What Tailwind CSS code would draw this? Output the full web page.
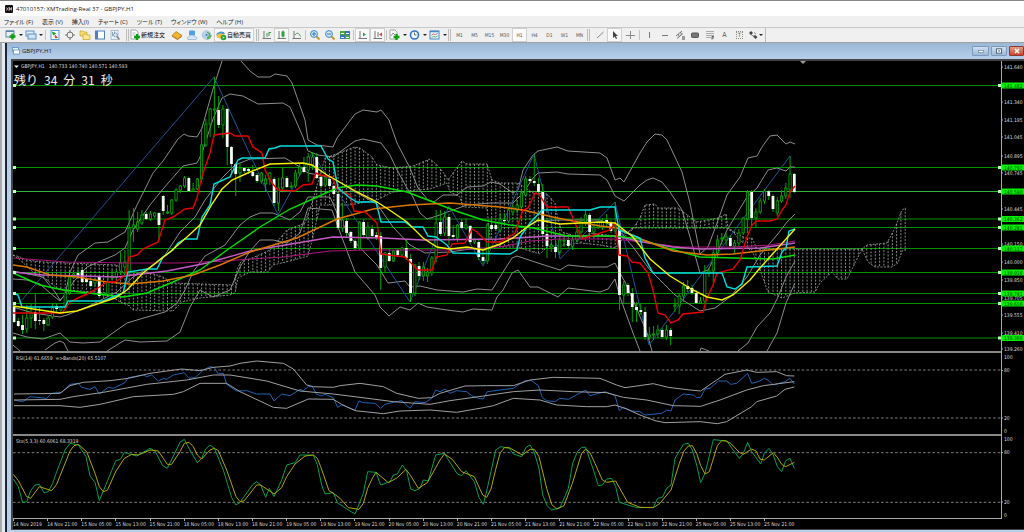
<!DOCTYPE html>
<html lang="ja">
<head>
    <meta charset="UTF-8">
    <meta name="viewport" content="width=device-width, initial-scale=1.0">
    <title>47010157: XMTrading-Real 37 - GBPJPY,H1</title>
    <script src="https://cdn.jsdelivr.net/npm/@tailwindcss/browser@4"></script>
</head>
<body class="min-h-screen flex flex-col bg-[#f0f0f0] overflow-x-hidden font-['Open_Sans','Noto_Sans_CJK_JP',sans-serif] text-[#222]">

    <!-- Title bar -->
    <header class="flex items-center h-4 shrink-0 border-t border-[#888] bg-white pl-[5px] gap-[3px]">
        <svg class="w-2 h-2" viewBox="0 0 8 8"><rect width="8" height="8" rx="1" fill="#111"/><path d="M1.5 2.5l2 3M3.5 2.5l-2 3M4.5 5.5v-3l1 2 1-2v3" stroke="#e8e8e8" stroke-width=".7" fill="none"/><path d="M1.5 5.5l1-1.500" stroke="#e33" stroke-width=".8"/></svg>
        <h1 class="text-[6px] leading-[8px] whitespace-nowrap">47010157: XMTrading-Real 37 - GBPJPY,H1</h1>
    </header>

    <!-- Menu -->
    <nav class="flex items-center h-[11px] shrink-0 pl-1 gap-[9px] text-[6px] leading-[10px] whitespace-nowrap [font-feature-settings:'palt']">
        <a href="#">ファイル (F)</a>
        <a href="#">表示 (V)</a>
        <a href="#">挿入(I)</a>
        <a href="#">チャート (C)</a>
        <a href="#">ツール (T)</a>
        <a href="#">ウィンドウ (W)</a>
        <a href="#">ヘルプ (H)</a>
    </nav>

    <!-- Toolbar -->
    <div class="flex items-stretch h-4 shrink-0 border-t border-b border-t-[#c8c8c8] border-b-[#a0a0a0] pl-1 text-[5px] leading-[12px] text-[#555] font-['DejaVu_Sans_Condensed','Noto_Sans_CJK_JP',sans-serif]">
        <button aria-label="New chart" class="w-5 flex items-center gap-[2px]">
            <svg class="w-[13px] h-3" viewBox="0 0 13 12"><rect x="2" y="2" width="8" height="6" fill="#e8f2fa" stroke="#5a83ad"/><rect x="2" y="1.500" width="8" height="1.500" fill="#5a83ad"/><path d="M8.500 4.500v6M5.500 7.500h6" stroke="#12a012" stroke-width="2.400"/></svg>
            <svg class="w-1 h-1" viewBox="0 0 4 4"><path d="M0 1h4l-2 2z" fill="#222"/></svg>
        </button>
        <button aria-label="Profiles" class="w-5 flex items-center gap-[2px]">
            <svg class="w-[13px] h-3" viewBox="0 0 13 12"><rect x="2" y="2" width="8" height="5" fill="#e4eefa" stroke="#5c8fc4"/><rect x="4" y="5" width="8" height="5" fill="#d2e2f5" stroke="#5c8fc4"/></svg>
            <svg class="w-1 h-1" viewBox="0 0 4 4"><path d="M0 1h4l-2 2z" fill="#222"/></svg>
        </button>
        <span class="w-px my-[2px] mx-px bg-[#c4c4c4]"></span>
        <button aria-label="Market watch" class="w-[15px] flex items-center justify-center">
            <svg class="w-3 h-3" viewBox="0 0 12 12"><rect x="2" y="1.500" width="8" height="9" fill="#fff" stroke="#58a0d8"/><path d="M3.500 3l3 1.500-2 1.500z" fill="#18a828" stroke="#18a828"/><path d="M6 6.500l2.500 2-2 .5z" fill="#d8442a" stroke="#d8442a"/></svg>
        </button>
        <button aria-label="Data window" class="w-[15px] flex items-center justify-center">
            <svg class="w-3 h-3" viewBox="0 0 12 12" fill="none" stroke="#777"><circle cx="6" cy="6" r="3"/><path d="M6 1v3M6 8v3M1 6h3M8 6h3"/></svg>
        </button>
        <button aria-label="Navigator" class="w-[15px] flex items-center justify-center">
            <svg class="w-3 h-3" viewBox="0 0 12 12"><path d="M1 2h3l1 1h3v4H1z" fill="#f7dd72" stroke="#c9a02f" stroke-width=".7"/><path d="M4 5h3l1 1h3v4.500H4z" fill="#ffe88a" stroke="#c9a02f" stroke-width=".7"/></svg>
        </button>
        <button aria-label="Terminal" class="w-[15px] flex items-center justify-center">
            <svg class="w-3 h-3" viewBox="0 0 12 12"><rect x="1.500" y="2" width="9" height="8" fill="#fff" stroke="#4b7fc0"/><rect x="1.500" y="2" width="2.500" height="8" fill="#4b7fc0"/></svg>
        </button>
        <button aria-label="Strategy tester" class="w-[15px] flex items-center justify-center">
            <svg class="w-3 h-3" viewBox="0 0 12 12"><rect x="2" y="1.500" width="7" height="9" fill="#eef3f8" stroke="#9fb3c8" stroke-width=".8"/><path d="M3.500 3v4M5.500 2.500v3" stroke="#8aa3bd"/><circle cx="6.500" cy="6" r="2" fill="#d4e6f7" stroke="#6f93b8" stroke-width=".8"/><path d="M8 7.500l2.500 3" stroke="#777" stroke-width="1.200"/></svg>
        </button>
        <span class="w-[3px] my-px ml-1 border-l border-r border-[#bbb]"></span>
        <button class="w-[40px] flex items-center whitespace-nowrap text-[6px] text-black">
            <svg class="w-3 h-3 shrink-0" viewBox="0 0 12 12"><path d="M2 1h5l2 2v7H2z" fill="#fff" stroke="#8a949e" stroke-width=".8"/><path d="M3.500 4h3M3.500 6h2" stroke="#888" stroke-width=".6"/><path d="M8 5v6M5 8h6" stroke="#12a012" stroke-width="2.400"/></svg>
            新規注文
        </button>
        <button aria-label="MetaEditor" class="w-[15px] flex items-center justify-center">
            <svg class="w-3 h-3" viewBox="0 0 12 12"><path d="M1 6.500l4-4 6 4-4.500 3.500z" fill="#f1b52e" stroke="#a8741a" stroke-width=".7"/><path d="M1 6.500l5.500 3.500 4.500-3.500v1L6.500 11 1 7.500z" fill="#b57a1d"/></svg>
        </button>
        <button aria-label="Community" class="w-[15px] flex items-center justify-center">
            <svg class="w-3 h-3" viewBox="0 0 12 12"><rect x="3" y="1.500" width="6" height="5" rx="1" fill="#4f9fe3"/><path d="M2 10.500c-1.500-2 0-3 1.500-3 1-1.800 4-1.800 4.500 0 3-.5 3.500 2 2 3z" fill="#d7e6f5" stroke="#8aaed2" stroke-width=".7"/></svg>
        </button>
        <button aria-label="Signals" class="w-[15px] flex items-center justify-center">
            <svg class="w-3 h-3" viewBox="0 0 12 12"><circle cx="5.500" cy="6" r="4.300" fill="#b8d4e8" stroke="#8fb4cc" stroke-width=".6"/><path d="M6 3.500a2.500 2.500 0 0 1 0 5M6 10a4 4 0 0 0 4-4" fill="none" stroke="#4aa84a" stroke-width="1.200"/><circle cx="5.500" cy="6" r="1" fill="#3c78a8"/></svg>
        </button>
        <button class="w-[40px] flex items-center whitespace-nowrap text-[6px] text-black bg-[#f9f9f9] border border-[#d0d0d0]">
            <svg class="w-3 h-3 shrink-0" viewBox="0 0 12 12"><path d="M1 6c1-4 8-5 9-1z" fill="#4b97d2"/><ellipse cx="5.500" cy="7" rx="4" ry="2.500" fill="#f0c040"/><circle cx="8.500" cy="8.500" r="2.800" fill="#1fa32c"/><path d="M7.700 7.200v2.600l2-1.300z" fill="#fff"/></svg>
            自動売買
        </button>
        <span class="w-[3px] my-px ml-[2px] border-l border-r border-[#bbb]"></span>
        <button aria-label="Bar chart" class="w-[15px] flex items-center justify-center">
            <svg class="w-3 h-3" viewBox="0 0 12 12" fill="none" stroke="#777"><path d="M3 2v8M1.500 9.500h8.500"/><path d="M6 4v4M8 3v4M8 3.500h2" stroke="#3a9a4a"/></svg>
        </button>
        <button aria-label="Candlesticks" class="w-[15px] flex items-center justify-center bg-[#f9f9f9] border border-[#d0d0d0]">
            <svg class="w-3 h-3 shrink-0" viewBox="0 0 12 12" fill="none" stroke="#777"><path d="M3 2v8M1.500 9.500h8.500"/><path d="M7 1.500v7" stroke="#2c9a3c"/><rect x="6" y="3" width="2" height="4" fill="#2fbd46" stroke="#2c9a3c"/></svg>
        </button>
        <button aria-label="Line chart" class="w-[15px] flex items-center justify-center">
            <svg class="w-3 h-3" viewBox="0 0 12 12" fill="none" stroke="#777"><path d="M3 2v8M1.500 9.500h8.500"/><path d="M4 6c2-3 4-2 5.500 1.500" stroke="#3a9a4a"/></svg>
        </button>
        <span class="w-px my-[2px] mx-px bg-[#c4c4c4]"></span>
        <button aria-label="Zoom in" class="w-[15px] flex items-center justify-center">
            <svg class="w-3 h-3" viewBox="0 0 12 12"><path d="M7 7l3.500 3.500" stroke="#c89a28" stroke-width="2"/><circle cx="5" cy="5" r="3.400" fill="#d5ebfb" stroke="#3a83c8"/><path d="M5 3v4M3 5h4" stroke="#2d74ba"/></svg>
        </button>
        <button aria-label="Zoom out" class="w-[15px] flex items-center justify-center">
            <svg class="w-3 h-3" viewBox="0 0 12 12"><path d="M7 7l3.500 3.500" stroke="#c89a28" stroke-width="2"/><circle cx="5" cy="5" r="3.400" fill="#d5ebfb" stroke="#3a83c8"/><path d="M3 5h4" stroke="#2d74ba"/></svg>
        </button>
        <button aria-label="Tile windows" class="w-[15px] flex items-center justify-center">
            <svg class="w-3 h-3" viewBox="0 0 12 12"><path d="M1 2h5v4H1zM6 6h5v4H6z" fill="#4aa83c"/><path d="M6 2h5v4H6zM1 6h5v4H1z" fill="#3a72c0"/><path d="M2 4h3v1H2zM7 4h3v1H7zM2 8h3v1H2zM7 8h3v1H7z" fill="#fff"/></svg>
        </button>
        <span class="w-px my-[2px] mx-px bg-[#c4c4c4]"></span>
        <button aria-label="Auto scroll" class="w-[15px] flex items-center justify-center bg-[#f9f9f9] border border-[#d0d0d0]">
            <svg class="w-3 h-3 shrink-0" viewBox="0 0 12 12" fill="none" stroke="#777"><path d="M3 2v8M1.500 9.500h8.500"/><path d="M6 3.500v4l3-2z" fill="#2fa844" stroke="none"/></svg>
        </button>
        <button aria-label="Chart shift" class="w-[15px] flex items-center justify-center bg-[#f9f9f9] border border-[#d0d0d0]">
            <svg class="w-3 h-3 shrink-0" viewBox="0 0 12 12" fill="none" stroke="#777"><path d="M3 2v8M1.500 9.500h8.500M6 3v5"/><path d="M10 3.500v4l-3-2z" fill="#d04a30" stroke="none"/></svg>
        </button>
        <span class="w-px my-[2px] mx-px bg-[#c4c4c4]"></span>
        <button aria-label="Indicators" class="w-5 flex items-center gap-[2px]">
            <svg class="w-[13px] h-3" viewBox="0 0 13 12"><path d="M2 1h5l2 2v7H2z" fill="#fff" stroke="#8a949e" stroke-width=".8"/><path d="M3 7l2-3 2 2" stroke="#777" fill="none" stroke-width=".8"/><path d="M8.500 5v6M5.500 8h6" stroke="#12a012" stroke-width="2.400"/></svg>
            <svg class="w-1 h-1" viewBox="0 0 4 4"><path d="M0 1h4l-2 2z" fill="#222"/></svg>
        </button>
        <button aria-label="Periods" class="w-5 flex items-center gap-[2px]">
            <svg class="w-[13px] h-3" viewBox="0 0 13 12"><circle cx="6.500" cy="6" r="4" fill="#f0f7fd" stroke="#2d76c4" stroke-width="1.600"/><path d="M6.500 3.500V6h2" fill="none" stroke="#555" stroke-width=".8"/></svg>
            <svg class="w-1 h-1" viewBox="0 0 4 4"><path d="M0 1h4l-2 2z" fill="#222"/></svg>
        </button>
        <button aria-label="Templates" class="w-5 flex items-center gap-[2px]">
            <svg class="w-[13px] h-3" viewBox="0 0 13 12"><rect x="2" y="2" width="9" height="8" fill="#eaf4fb" stroke="#4c88c2"/><path d="M2 2.500h9" stroke="#4c88c2" stroke-width="1.500"/><path d="M3.500 6l2-1 2 .5 2-1" fill="none" stroke="#c5532c" stroke-width=".8"/><path d="M3.500 8.500l2-1 2 .5 2-1" fill="none" stroke="#3b9a48" stroke-width=".8"/></svg>
            <svg class="w-1 h-1" viewBox="0 0 4 4"><path d="M0 1h4l-2 2z" fill="#222"/></svg>
        </button>
        <span class="w-[3px] my-px mr-px border-l border-r border-[#bbb]"></span>
        <button class="w-[15px]">M1</button>
        <button class="w-[15px]">M5</button>
        <button class="w-[15px]">M15</button>
        <button class="w-[15px]">M30</button>
        <button class="w-[15px] bg-[#fafafa] border border-[#d0d0d0]">H1</button>
        <button class="w-[15px]">H4</button>
        <button class="w-[15px]">D1</button>
        <button class="w-[15px]">W1</button>
        <button class="w-[15px]">MN</button>
        <span class="w-[3px] my-px mr-[2px] border-l border-r border-[#bbb]"></span>
        <button aria-label="Trend line" class="w-[15px] flex items-center justify-center">
            <svg class="w-3 h-3" viewBox="0 0 12 12"><path d="M3 9l6.500-6" stroke="#888"/></svg>
        </button>
        <button aria-label="Cursor" class="w-[15px] flex items-center justify-center bg-[#fafafa] border border-[#d0d0d0]">
            <svg class="w-3 h-3 shrink-0" viewBox="0 0 12 12"><path d="M4 2v7l1.700-1.500 1.200 2.500 1.200-.6-1.200-2.400H9z" fill="#444"/></svg>
        </button>
        <button aria-label="Crosshair" class="w-[15px] flex items-center justify-center">
            <svg class="w-3 h-3" viewBox="0 0 12 12"><path d="M6.500 2v8M2 6.500h9" stroke="#888"/></svg>
        </button>
        <span class="w-px my-[2px] mx-[2px] bg-[#c4c4c4]"></span>
        <button aria-label="Vertical line" class="w-[15px] flex items-center justify-center">
            <svg class="w-3 h-3" viewBox="0 0 12 12"><path d="M5.500 3v6" stroke="#777"/></svg>
        </button>
        <button aria-label="Horizontal line" class="w-[15px] flex items-center justify-center">
            <svg class="w-3 h-3" viewBox="0 0 12 12"><path d="M3 6.500h6" stroke="#777"/></svg>
        </button>
        <button aria-label="Equidistant channel" class="w-[15px] flex items-center justify-center">
            <svg class="w-3 h-3" viewBox="0 0 12 12"><path d="M2 7l6-5M3 9.500l6-5M4 5l1.500 3M6.500 3l1 3" stroke="#777"/><path d="M8 8h3M8 10h3" stroke="#444"/></svg>
        </button>
        <button aria-label="Rectangle" class="w-[15px] flex items-center justify-center">
            <svg class="w-3 h-3" viewBox="0 0 12 12"><rect x="2.500" y="4" width="7" height="4.500" rx="1" fill="#777" stroke="#555"/></svg>
        </button>
        <button aria-label="Fibonacci" class="w-[15px] flex items-center justify-center">
            <svg class="w-3 h-3" viewBox="0 0 12 12"><path d="M2 2.500h8M2 4.500h8M2 6.500h8M2 8.500h5" stroke="#999" stroke-width=".8"/><path d="M8 7.500h2M8 7.500v3M8 9h2" stroke="#444" stroke-width=".8" fill="none"/></svg>
        </button>
        <button class="w-[15px] text-[7px]">A</button>
        <button class="w-[15px] flex items-center justify-center text-[6px]"><span class="border border-dotted border-[#888] leading-[6px] px-px">T</span></button>
        <button aria-label="Arrows" class="w-[18px] flex items-center">
            <svg class="w-3 h-3" viewBox="0 0 12 12"><path d="M2 4l2-2 2 2-2 2zM6 7.500l2-1.500 2.500 2-2 2z" fill="#444"/><path d="M3 5l5 3M7 3.500l2 1.500" stroke="#666" stroke-width=".8"/></svg>
            <svg class="w-1 h-1" viewBox="0 0 4 4"><path d="M0 1h4l-2 2z" fill="#222"/></svg>
        </button>
        <span class="w-px bg-[#bbb]"></span>
    </div>

    <!-- MDI area -->
    <main class="flex flex-1 bg-[#b9cfe8]">
        <div class="w-[7px] shrink-0 bg-[#e3ebf6] border-l-2 border-r-2 border-l-[#a9a9a9] border-r-[#1b2636]"></div>
        <section class="flex-1 min-w-0 flex flex-col">
            <!-- Chart window caption -->
            <div class="flex items-center h-4 shrink-0 pl-[5px] gap-[2px] bg-gradient-to-b from-[#9ab7d6] to-[#b7cfeb]">
                <svg class="w-2 h-2" viewBox="0 0 8 8"><rect x=".5" y=".5" width="6" height="4" fill="#eaf3fc" stroke="#5c90c8" stroke-width=".8"/><rect x="1.500" y="3" width="6" height="4" fill="#fff" stroke="#5c90c8" stroke-width=".8"/></svg>
                <h2 class="flex-1 text-[6px] leading-[10px]">GBPJPY,H1</h2>
                <button aria-label="Minimize" class="w-[17px] h-[10px] flex items-center justify-center rounded-[1px] border border-[#7d9abb] bg-gradient-to-b from-[#cfdff0] to-[#9bb9d8]"><svg class="w-2 h-[6px] shrink-0" viewBox="0 0 8 6"><rect x="1.500" y="2.500" width="5" height="2" fill="#fff" stroke="#66809c" stroke-width=".7"/></svg></button>
                <button aria-label="Maximize" class="w-[16px] h-[10px] flex items-center justify-center rounded-[1px] border border-[#7d9abb] bg-gradient-to-b from-[#cfdff0] to-[#9bb9d8]"><svg class="w-2 h-[6px] shrink-0" viewBox="0 0 8 6"><rect x="1.500" y=".8" width="5" height="4.400" fill="#fff" stroke="#4f667f"/><rect x="3.200" y="2.200" width="1.600" height="1.400" fill="#4f667f"/></svg></button>
                <button aria-label="Close" class="w-[15px] h-[10px] flex items-center justify-center rounded-[1px] border border-[#8a3a2c] bg-gradient-to-b from-[#e39a86] to-[#c8452a]"><svg class="w-2 h-[6px] shrink-0" viewBox="0 0 8 6"><path d="M2 1l4 4M6 1L2 5" stroke="#fff" stroke-width="1.500"/></svg></button>
            </div>

            <div class="ml-1 mb-[2px] border-t-2 border-l-2 border-b border-[#444] bg-black text-[#ddd] font-['DejaVu_Sans_Condensed','Noto_Sans_CJK_JP',sans-serif] text-[5px] leading-[6px]">
                <!-- Price chart -->
                <div class="flex h-[290px]">
                    <div class="relative flex-1 min-w-0">
                        <svg id="price" class="block w-full h-full" viewBox="13 61 988 290" preserveAspectRatio="none" fill="none"></svg>
                        <div class="absolute left-px top-[2px] flex flex-col gap-1">
                            <p class="flex gap-1 whitespace-pre"><span class="flex items-center gap-[2px]"><svg class="w-[5px] h-[5px]" viewBox="0 0 5 5"><path d="M0 1.500h5l-2.500 2.500z" fill="#eee"/></svg>GBPJPY,H1</span><span>140.733 140.740 140.571 140.593</span></p>
                            <p class="flex gap-[6px] font-['Noto_Sans_CJK_JP',sans-serif] text-[12px] leading-[14px] text-[#eee] whitespace-nowrap"><span>残り</span><span>34</span><span>分</span><span>31</span><span>秒</span></p>
                        </div>
                    </div>
                    <svg id="prices" class="w-[23px] h-[290px] shrink-0 border-l border-[#aaa] overflow-visible" viewBox="0 61 22 290"></svg>
                </div>
                <!-- RSI -->
                <div class="flex h-[83px]">
                    <div class="relative flex-1 min-w-0 border-t-2 border-[#888]">
                        <svg id="rsi" class="block w-full h-full" viewBox="39 24 2964 243" preserveAspectRatio="none" fill="none"></svg>
                        <p class="absolute left-[3px] top-[2px] whitespace-pre">RSI(14) 61.6659  =&gt;Bands(20) 65.5107</p>
                    </div>
                    <svg class="w-[23px] h-[83px] shrink-0 border-l border-[#aaa]" viewBox="0 0 22 83" fill="#ddd"><path d="M0 19.500h1M0 67h1" stroke="#aaa"/><text x="2" y="8">100</text><text x="2" y="21">80</text><text x="2" y="69">20</text><text x="2" y="82">0</text></svg>
                </div>
                <!-- Stochastic -->
                <div class="flex h-[84px]">
                    <div class="relative flex-1 min-w-0 border-t-2 border-[#888]">
                        <svg id="sto" class="block w-full h-full" viewBox="39 273 2964 246" preserveAspectRatio="none" fill="none"></svg>
                        <p class="absolute left-[3px] top-[2px]">Sto(5,3,3) 60.6061 68.3319</p>
                    </div>
                    <svg class="w-[23px] h-[84px] shrink-0 border-l border-[#aaa]" viewBox="0 0 22 84" fill="#ddd"><path d="M0 18.500h1M0 68h1" stroke="#aaa"/><text x="2" y="7">100</text><text x="2" y="20">80</text><text x="2" y="70">20</text><text x="2" y="83">0</text></svg>
                </div>
                <!-- Time axis -->
                <ol id="dates" class="flex h-[11px] mr-[22px] border-t border-[#aaa] whitespace-nowrap"></ol>
            </div>
        </section>
    </main>

    <script>
        const NS = 'http://www.w3.org/2000/svg';
        const BAR = 4.264;

        function add(parent, tag, attrs, text) {
            const el = document.createElementNS(NS, tag);
            for (const k in attrs) el.setAttribute(k, attrs[k]);
            if (text) el.textContent = text;
            parent.appendChild(el);
        }

        function line(parent, points, color, width) {
            add(parent, 'polyline', { points: points, stroke: color, 'stroke-width': width });
        }

        const price = document.getElementById('price');
        const prices = document.getElementById('prices');

        // Horizontal levels
        const levels = [
            ['141.482', 85.5], ['140.791', 167.5], ['140.590', 191.5], ['140.362', 219], ['140.291', 227.5],
            ['140.117', 248.5], ['139.916', 272.5], ['139.741', 293.5], ['139.656', 303.5], ['139.366', 338]
        ];
        levels.forEach(([, y]) => {
            add(price, 'path', { d: `M13 ${y}H1001`, stroke: y === 191.5 ? '#35b835' : '#009400' });
        });

        // Ichimoku cloud
        const cloudTop = '13,255 20,257 27,260 43,262 117,265 125,275 147,272 163,277 172,283 233,285 238,267 242,260 250,259 270,250 287,230 305,223 312,203 325,158 355,147 360,148 372,157 377,165 393,168 413,166 430,159 437,165 443,172 448,180 453,173 462,161 467,164 487,164 492,180 500,183 518,183 533,193 547,194 555,203 558,220 562,232 582,238 590,233 615,236 622,235 632,230 640,218 645,205 655,204 658,208 678,208 690,217 697,222 718,218 726,214 728,228 745,238 752,238 757,249 862,249 867,245 887,243 895,228 902,210 906,208';
        const cloudBottom = '13,255 20,260 33,272 47,280 57,288 67,290 107,293 120,302 128,305 133,310 173,311 182,302 200,298 230,295 235,293 238,278 250,272 268,272 273,265 290,261 308,256 313,237 320,205 350,205 377,200 393,192 430,189 447,183 450,192 460,197 463,207 487,208 490,238 500,247 517,247 533,252 540,254 547,247 580,243 600,245 615,248 622,240 632,228 690,228 726,228 733,232 740,240 753,253 760,270 768,292 782,298 795,293 815,292 820,283 832,272 838,279 847,279 855,263 862,249 868,262 875,267 892,267 898,263 902,251 906,250';
        const parse = s => s.split(' ').map(p => p.split(',').map(Number));
        function at(pts, x) {
            for (let i = 1; i < pts.length; i++) {
                if (x <= pts[i][0]) {
                    const [x0, y0] = pts[i - 1], [x1, y1] = pts[i];
                    return y0 + (y1 - y0) * (x - x0) / (x1 - x0);
                }
            }
            return pts[pts.length - 1][1];
        }
        const top_ = parse(cloudTop), bottom = parse(cloudBottom);
        let hatch = '';
        for (let x = 14; x <= 906; x += BAR) hatch += `M${x.toFixed(1)} ${at(top_, x).toFixed(1)}V${at(bottom, x).toFixed(1)}`;
        add(price, 'path', { d: hatch, stroke: '#a4aca4', 'stroke-width': .8, 'stroke-dasharray': '2 1.4' });
        [cloudTop, cloudBottom].forEach(p => {
            add(price, 'polyline', { points: p, stroke: '#a0a8a0', 'stroke-width': .8, 'stroke-dasharray': '2 1.4' });
        });

        // Bollinger bands
        [
            '13,271 43,277 55,292 60,300 65,295 70,272 78,255 95,243 108,242 125,232 137,205 153,173 163,161 178,139 184,134 188,136 197,137 202,128 213,89 222,61',
            '241,61 250,71 258,77 270,77 275,74 287,76 292,83 305,120 308,140 317,145 333,147 337,138 355,114 363,110 377,112 381,110 389,120 397,143 410,168 418,188 428,200 434,202 443,195 457,195 467,187 483,186 491,182 500,184 513,193 518,190 523,170 533,155 538,151 557,147 568,151 600,153 607,158 615,180 620,178 624,182 640,153 647,142 655,134 662,135 667,140 682,172 690,203 700,254 708,247 717,223 727,195 740,177 748,158 757,156 762,147 770,136 777,135 786,144 790,142 795,144',
            '13,279 27,280 40,284 50,293 60,301 66,293 75,280 87,267 103,260 115,255 125,248 133,230 150,205 163,189 183,166 197,163 202,153 213,119 222,98 230,94 243,96 258,104 283,103 290,107 303,137 308,151 318,155 333,157 355,141 363,139 381,143 390,155 397,170 407,188 413,197 420,213 427,219 437,216 453,210 467,205 490,203 513,203 523,193 533,178 538,173 557,172 568,174 600,175 607,180 615,196 624,201 640,185 647,180 653,178 662,182 670,192 682,210 690,237 700,273 708,270 717,253 727,230 747,197 757,188 768,170 777,168 786,171 790,167 795,167',
            '13,307 33,313 60,317 67,315 87,307 117,292 133,277 150,267 165,255 180,232 195,217 205,200 222,178 235,165 250,159 285,158 300,167 308,173 333,178 357,193 377,204 393,227 410,245 425,253 450,252 470,249 485,250 500,245 512,238 530,225 538,221 560,220 600,220 617,228 633,247 650,270 675,295 700,311 715,308 730,297 747,277 760,255 777,235 787,222 795,214',
            '13,333 27,337 43,339 60,333 70,342 83,343 100,342 127,323 147,317 165,312 177,303 185,290 193,272 205,256 225,245 240,225 250,217 260,213 273,213 290,220 300,212 308,197 330,197 337,213 350,237 367,255 377,265 388,283 405,281 410,287 420,286 437,290 463,292 477,289 492,290 497,282 500,277 512,258 517,256 538,263 560,270 568,265 587,267 607,267 615,263 620,273 625,282 633,300 647,333 652,351',
            '738,351 748,343 757,327 770,313 778,297 786,277 795,261',
            '13,345 20,351', '45,350 55,343 60,341 64,343 68,351',
            '107,351 125,340 140,342 167,341 180,332 190,307 200,290 213,297 230,290 240,267 250,251 260,240 273,240 287,243 300,233 308,208 332,210 338,227 355,272 375,295 380,307 389,316 400,307 410,310 418,303 427,307 447,310 463,312 473,309 492,310 497,297 503,290 512,273 518,270 530,287 538,287 558,297 568,288 600,292 608,289 615,279 620,297 633,333 640,351',
            '700,351 701,348 709,351', '767,351 777,333 786,303 795,283'
        ].forEach(p => line(price, p, '#8c8c8c', 1));

        // ZigZag
        line(price, '22,300 214,77 278,215 312,153 410,302 449,206 483,266 534,154 560,259 615,202 649,345 790,156', '#1c5596', 1);

        // Candles, one row per bar: open, high, low, close (plot pixels)
        const candles = [
            [307,303,323,322],[321,318,327,326],[325,315,334,330],[329,305,333,318],[318,303,328,313],[312,294,329,321],[320,307,325,321],[320,318,331,324],[325,315,326,318],[317,303,319,308],
            [306,304,312,309],[310,306,312,307],[307,290,308,293],[293,275,295,277],[277,273,279,274],[273,268,276,275],[270,269,283,282],[279,278,283,282],[281,279,287,286],[283,278,287,280],
            [277,275,298,296],[295,292,299,293],[294,272,296,282],[278,270,280,276],[277,270,279,272],[271,252,275,263],[267,250,277,262],[272,210,277,228],[228,208,242,225],[229,212,232,222],
            [223,210,225,215],[214,212,220,219],[219,211,221,214],[216,212,218,213],[213,212,240,225],[196,195,215,211],[213,205,214,212],[213,199,215,200],[200,188,202,190],[190,185,193,186],
            [186,176,188,178],[178,177,192,191],[191,183,192,189],[189,178,190,179],[179,127,182,145],[145,119,147,124],[124,108,137,109],[110,77,137,109],[110,96,128,125],[125,105,138,109],
            [109,108,165,147],[147,146,175,164],[164,163,196,174],[173,163,182,168],[168,167,173,171],[169,167,174,171],[172,165,177,176],[175,173,183,181],[181,172,184,173],[184,175,191,179],
            [179,172,185,173],[179,177,206,203],[203,178,211,188],[188,168,190,178],[178,176,188,187],[187,182,189,186],[186,170,188,173],[173,163,176,167],[167,157,173,172],[170,153,182,157],
            [166,152,170,157],[157,153,179,178],[177,175,188,186],[185,176,187,178],[179,178,188,186],[186,185,195,194],[194,192,230,228],[228,203,232,220],[221,218,238,233],[232,231,243,241],
            [241,239,250,248],[248,221,250,222],[222,219,238,235],[238,222,240,227],[229,225,238,236],[235,232,240,237],[236,232,290,268],[267,252,272,253],[253,248,262,261],[261,250,262,251],
            [250,248,257,255],[255,247,257,248],[248,240,260,258],[259,254,302,293],[293,264,296,265],[266,262,280,276],[276,262,281,267],[276,268,282,272],[273,256,276,258],[258,210,262,223],
            [222,210,236,234],[233,211,236,217],[217,214,245,236],[235,225,240,237],[238,224,242,225],[222,219,229,228],[228,218,230,225],[226,225,244,242],[242,238,244,240],[242,240,260,257],
            [257,250,264,261],[261,223,264,225],[225,218,231,229],[225,222,231,229],[230,213,232,220],[220,213,224,221],[221,207,223,210],[212,205,215,207],[210,200,213,205],[207,190,209,193],
            [195,176,197,179],[179,176,183,181],[181,154,186,183],[184,178,195,192],[192,184,236,234],[234,230,258,246],[247,242,252,245],[247,240,258,252],[252,238,255,240],[241,238,247,240],
            [240,238,248,246],[246,236,250,240],[240,227,242,232],[232,217,234,221],[222,210,226,215],[215,213,234,232],[232,224,235,227],[227,219,229,222],[226,218,230,222],[220,214,227,223],
            [222,220,233,231],[231,202,234,225],[230,224,310,295],[295,281,303,285],[285,283,296,293],[293,288,322,307],[307,302,322,310],[310,303,315,312],[312,307,340,337],[337,327,340,335],
            [335,326,340,334],[334,325,338,330],[330,328,339,337],[337,325,340,330],[330,328,345,336],[306,298,312,305],[306,293,314,296],[296,282,302,286],[286,280,292,289],[288,285,295,293],
            [293,290,304,303],[303,297,304,301],[301,265,303,272],[273,268,277,271],[271,250,283,253],[253,235,257,240],[239,233,245,238],[240,233,246,237],[238,235,247,246],[246,240,253,243],
            [243,229,246,233],[233,217,235,218],[219,190,233,192],[192,190,228,218],[218,208,227,212],[212,198,214,201],[201,189,204,191],[191,190,200,196],[196,194,212,209],[213,197,216,201],
            [201,190,203,196],[196,183,199,188],[190,156,198,174],[174,173,193,192]
        ];
        candles.forEach(([o, h, l, c], i) => {
            const x = 14 + i * BAR;
            add(price, 'path', { d: `M${x} ${h}V${Math.min(o, c)}M${x} ${Math.max(o, c)}V${l}`, stroke: '#00a800', 'stroke-width': 1 });
            if (c > o) add(price, 'rect', { x: x - 1.4, y: o, width: 2.8, height: c - o, fill: '#f4fff4' });
            else add(price, 'rect', { x: x - 1.1, y: c, width: 2.2, height: Math.max(o - c, .6), fill: '#000', stroke: '#00b400', 'stroke-width': .8 });
        });

        // Moving averages
        line(price, '13,258 67,262 130,263 180,263 225,261 250,259 283,257 330,251 370,250 450,250 500,247 530,241 560,239 615,239 650,243 680,247 733,247 770,245 795,241', '#a8157a', 1.2);
        line(price, '13,272 43,275 80,276 117,277 133,275 167,271 207,263 250,251 297,243 333,237 383,238 423,240 500,239 550,236 615,236 643,242 673,247 700,249 760,248 795,243', '#c45ac4', 1.4);
        line(price, '13,273 40,285 63,290 97,294 123,297 147,293 173,282 200,270 227,250 260,227 290,209 317,197 337,188 357,185 377,186 407,192 433,202 453,210 483,220 510,225 533,228 567,236 615,236 640,239 667,248 700,257 733,258 773,259 795,255', '#00e000', 1.4);
        line(price, '13,265 27,267 50,275 77,277 107,282 130,284 163,281 193,275 220,265 250,252 297,238 337,219 373,209 410,205 450,203 500,207 523,210 557,218 600,226 617,228 643,240 673,251 707,255 733,254 760,251 795,247', '#dc7800', 1.4);

        // Tenkan / Kijun
        line(price, '13,313 62,313 70,302 78,298 87,294 95,290 107,282 115,282 126,275 129,257 137,255 143,249 158,242 165,220 173,217 185,209 193,208 197,198 202,176 210,153 214,135 230,133 235,136 248,136 253,147 262,153 265,170 272,183 278,190 295,191 303,185 312,184 316,173 320,175 332,177 337,189 350,195 354,211 365,212 377,223 381,254 405,257 412,264 418,270 432,270 436,257 447,255 452,244 465,243 472,229 477,232 487,242 500,242 515,233 523,210 528,208 535,193 539,194 547,207 568,207 575,223 582,239 597,234 610,230 615,223 619,255 627,256 632,262 640,263 648,273 653,290 658,313 665,315 671,323 678,320 683,314 703,312 707,298 713,285 717,273 733,269 740,260 747,237 752,225 757,221 770,221 777,219 782,210 786,205 790,192 795,186', '#e80000', 1.4);
        line(price, '13,293 18,295 22,307 65,307 68,301 103,301 113,297 123,293 128,272 147,269 157,269 163,257 173,250 178,243 185,239 197,239 202,217 210,205 214,184 230,177 238,160 242,158 265,158 269,149 275,148 280,146 321,146 328,159 333,162 338,188 350,198 357,202 376,202 381,222 405,222 412,227 423,227 428,236 436,237 447,245 453,253 510,254 517,250 520,237 530,223 542,210 590,210 600,207 615,207 619,230 640,238 645,258 653,273 722,273 727,287 735,289 742,284 747,267 777,266 782,252 786,248 789,231 795,229', '#00dede', 1.4);
        line(price, '13,306 20,307 40,310 60,313 77,311 100,303 115,298 127,290 143,273 170,252 187,237 200,225 212,204 222,189 232,180 250,172 270,164 303,163 312,165 327,175 357,192 377,202 388,209 407,222 423,238 437,247 450,249 467,247 483,250 500,244 513,238 527,227 538,220 560,224 600,222 615,223 633,237 650,259 670,276 693,290 707,297 722,300 733,295 750,280 760,268 795,229', '#f4f000', 1.4);

        // Level handles at both ends
        levels.forEach(([, y]) => {
            add(price, 'rect', { x: 13, y: y - 1.5, width: 3, height: 3, fill: '#b8ffb8' });
            add(price, 'rect', { x: 998, y: y - 1.5, width: 3, height: 3, fill: '#b8ffb8' });
        });
        add(price, 'path', { d: 'M800 61h6l-3 3z', fill: '#999' });

        // Price scale
        [['141.640', 67], ['141.340', 102], ['141.195', 120], ['141.045', 137], ['140.895', 156], ['140.745', 173], ['140.445', 209],
         ['140.150', 244], ['140.000', 262], ['139.850', 280], ['139.705', 298], ['139.555', 315], ['139.410', 333], ['139.260', 349]].forEach(([t, y]) => {
            add(prices, 'path', { d: `M0 ${y}h1`, stroke: '#aaa' });
            add(prices, 'text', { x: 2, y: y + 2, fill: '#ddd' }, t);
        });
        levels.forEach(([t, y]) => {
            add(prices, 'rect', { x: 0, y: y - 3, width: 22, height: 6, fill: '#00f000' });
            add(prices, 'text', { x: 2, y: y + 2, fill: '#004000' }, t);
        });

        // Oscillators: each chunk is shifted by its own x offset
        function join(...chunks) {
            return chunks.map((c, i) => parse(c).map(([x, y]) => `${x + i * 1020},${y}`).join(' ')).join(' ');
        }

        const rsi = document.getElementById('rsi');
        const sto = document.getElementById('sto');
        [[rsi, 75], [rsi, 219], [sto, 323], [sto, 472]].forEach(([p, y]) => {
            add(p, 'path', { d: `M39 ${y}H3003`, stroke: '#7c7c7c', 'stroke-width': 3, 'stroke-dasharray': '8 6' });
        });
        line(rsi, join(
            '42,165 68,170 90,155 140,160 155,145 185,142 210,118 235,115 245,127 270,133 285,125 298,147 325,127 340,130 375,113 385,98 430,90 440,95 455,90 475,108 490,100 500,103 520,90 553,83 567,100 585,98 610,75 630,65 643,68 655,87 670,85 680,118 710,138 740,137 770,147 810,147 822,168 845,147 870,152 900,133 910,137 925,125 937,125 950,148 965,153 975,148 1000,158 1013,187',
            '5,180 45,195 57,168 70,173 105,175 122,190 135,178 160,172 185,167 210,190 225,170 255,173 275,160 287,135 300,140 315,132 330,145 350,137 380,140 395,152 415,160 430,162 442,140 480,135 520,130 555,107 575,107 595,122 607,158 620,167 645,170 660,160 685,163 705,152 737,135 750,152 795,140 825,152 838,197 850,187 875,198 900,200 915,210 945,207 965,205 980,195 993,198 1005,165',
            '10,147 40,150 50,158 62,157 75,132 90,130 115,108 140,108 152,118 170,115 203,85 215,115 235,110 253,100 268,108 280,120 315,110 330,100 343,117'), '#1f62b4', 3);
        line(rsi, join(
            '42,147 180,145 210,122 250,112 330,107 385,100 450,85 545,72 600,77 640,67 690,63 720,55 770,48 850,55 880,72 920,120 940,125 1000,127',
            '0,122 60,115 130,125 170,145 235,160 275,158 300,145 375,123 440,122 520,122 570,105 640,97 780,100 830,120 855,128 940,116 985,127',
            '30,135 62,138 110,105 135,88 200,75 230,82 290,80 320,92 343,93'), '#a0a0a0', 3);
        line(rsi, join(
            '42,165 180,163 220,155 310,142 440,118 560,105 640,90 690,90 800,108 900,138 1000,147',
            '60,157 160,170 270,178 330,167 430,153 520,140 600,135 700,140 800,143 850,157 920,165 1000,182',
            '62,184 120,165 200,135 250,122 343,110'), '#a0a0a0', 3);
        line(rsi, join(
            '42,182 180,182 240,187 300,178 400,155 520,148 550,140 600,115 680,115 720,140 820,187 860,190 925,162 1000,163',
            '5,178 45,197 130,206 180,198 270,195 350,202 430,188 460,182 520,160 600,165 650,180 740,185 800,185 825,180 860,192 900,210 945,227 975,233',
            '60,230 112,236 140,230 215,185 230,170 290,153 315,133 343,126'), '#a0a0a0', 3);
        line(sto, join(
            '40,402 55,425 68,473 80,470 92,437 105,420 118,418 132,443 145,440 158,415 170,380 195,315 210,295 235,300 258,335 270,393 285,412 298,467 347,348 362,342 373,322 410,333 450,310 465,318 488,362 502,370 540,292 553,283 568,312 592,353 605,340 617,312 630,300 643,310 670,375 695,458 708,480 720,472 757,420 770,410 782,420 797,457 808,430 822,455 845,405 860,360 885,353 900,330 940,330 952,360 965,420 975,447 1000,443 1013,475',
            '0,478 20,492 45,507 70,445 83,380 108,382 122,420 150,410 160,390 172,387 187,360 200,378 212,432 225,437 240,430 250,405 265,407 287,330 313,325 352,387 365,392 378,377 403,410 417,458 430,478 442,430 467,315 482,305 508,310 520,327 545,335 558,307 570,300 582,320 597,370 608,450 622,483 635,495 660,488 685,430 698,355 712,320 725,307 737,307 750,345 762,380 775,422 787,420 800,402 815,400 827,425 838,472 890,488 940,487 953,460 967,457 980,430 993,420 1005,340',
            '10,298 25,295 37,315 50,360 62,413 75,385 100,284 140,288 178,340 190,325 203,292 215,320 242,357 253,325 267,310 280,330 292,365 305,380 317,347 330,340 343,370'), '#00a050', 3);
        line(sto, join(
            '40,388 55,407 80,455 92,460 118,425 155,437 170,418 210,318 222,302 235,298 260,320 285,385 298,425 310,440 322,436 348,378 373,340 395,328 415,330 450,315 475,318 502,358 515,358 540,320 553,295 567,292 580,305 592,330 605,342 630,315 643,310 655,317 680,375 708,455 720,470 732,468 770,420 782,420 822,447 845,428 860,395 885,357 915,333 940,330 952,340 962,365 987,437 1000,445',
            '0,460 25,488 57,493 70,475 83,430 97,400 108,382 145,413 172,398 198,373 212,392 235,430 262,413 300,345 313,327 337,343 365,380 403,395 428,450 440,457 453,432 467,373 480,325 493,308 508,308 547,330 570,313 583,313 597,335 620,430 635,478 650,492 672,482 697,415 725,325 737,312 750,323 765,355 787,405 800,412 827,408 863,472 900,487 940,488 960,475 993,435 1018,355',
            '12,318 25,303 37,302 50,325 62,362 75,387 88,380 112,302 125,287 138,288 152,295 178,322 190,328 215,312 228,318 240,342 253,345 280,323 292,337 305,358 317,365 343,352'), '#b0a800', 3);

        // Time axis labels
        const dates = document.getElementById('dates');
        ['14 Nov 2019', '14 Nov 21:00', '15 Nov 05:00', '15 Nov 13:00', '15 Nov 21:00', '18 Nov 05:00', '18 Nov 13:00', '18 Nov 21:00',
         '19 Nov 05:00', '19 Nov 13:00', '19 Nov 21:00', '20 Nov 05:00', '20 Nov 13:00', '20 Nov 21:00', '21 Nov 05:00', '21 Nov 13:00',
         '21 Nov 21:00', '22 Nov 05:00', '22 Nov 13:00', '22 Nov 21:00', '25 Nov 05:00', '25 Nov 13:00', '25 Nov 21:00'].forEach(d => {
            const li = document.createElement('li');
            li.className = 'w-[3.453%] shrink-0 pt-[2px] bg-[linear-gradient(#aaa,#aaa)] bg-[length:1px_2px] bg-no-repeat';
            li.textContent = d;
            dates.appendChild(li);
        });
    </script>
</body>
</html>
